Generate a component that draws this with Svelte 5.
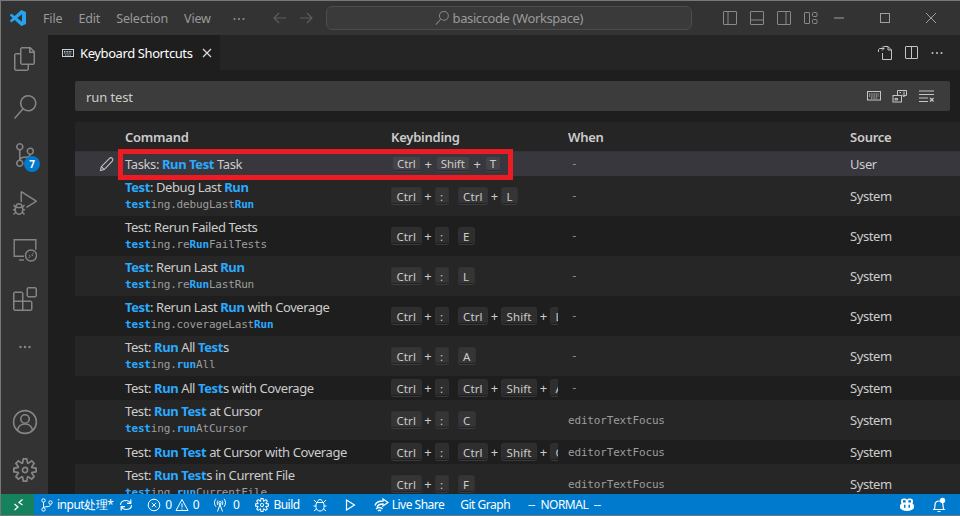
<script>
  const H = (t) => ({ h: t });
  const rows = [
    { sel: true, title: ['Tasks: ', H('Run Test'), ' Task'], keys: [['Ctrl', 'Shift', 'T']], when: '-', src: 'User' },
    { title: [H('Test'), ': Debug Last ', H('Run')], id: [H('test'), 'ing.debugLast', H('Run')], keys: [['Ctrl', ':'], ['Ctrl', 'L']], when: '-', src: 'System' },
    { title: ['Test: Rerun Failed Tests'], id: [H('test'), 'ing.re', H('Run'), 'FailTests'], keys: [['Ctrl', ':'], ['E']], when: '-', src: 'System' },
    { title: [H('Test'), ': Rerun Last ', H('Run')], id: [H('test'), 'ing.re', H('Run'), 'LastRun'], keys: [['Ctrl', ':'], ['L']], when: '-', src: 'System' },
    { title: [H('Test'), ': Rerun Last ', H('Run'), ' with Coverage'], id: [H('test'), 'ing.coverageLast', H('Run')], keys: [['Ctrl', ':'], ['Ctrl', 'Shift', 'L']], when: '-', src: 'System' },
    { title: ['Test: ', H('Run'), ' All ', H('Test'), 's'], id: [H('test'), 'ing.', H('run'), 'All'], keys: [['Ctrl', ':'], ['A']], when: '-', src: 'System' },
    { title: ['Test: ', H('Run'), ' All ', H('Test'), 's with Coverage'], keys: [['Ctrl', ':'], ['Ctrl', 'Shift', 'A']], when: '-', src: 'System' },
    { title: ['Test: ', H('Run Test'), ' at Cursor'], id: [H('test'), 'ing.', H('run'), 'AtCursor'], keys: [['Ctrl', ':'], ['C']], when: 'editorTextFocus', src: 'System' },
    { title: ['Test: ', H('Run Test'), ' at Cursor with Coverage'], keys: [['Ctrl', ':'], ['Ctrl', 'Shift', 'C']], when: 'editorTextFocus', src: 'System' },
    { title: ['Test: ', H('Run Test'), 's in Current File'], id: [H('test'), 'ing.', H('run'), 'CurrentFile'], keys: [['Ctrl', ':'], ['F']], when: 'editorTextFocus', src: 'System' }
  ];
  const menu = ['File', 'Edit', 'Selection', 'View'];
  const act = [
    'M17.5 0h-9L7 1.5V6H2.5L1 7.5v15.07L2.5 24h12.07L16 22.57V18h4.7l1.3-1.43V4.5L17.5 0zm0 2.12l2.38 2.38H17.5V2.12zm-3 20.38h-12v-15H7v9.07L8.5 18h6v4.5zm6-6h-12v-15H16V6h4.5v10.5z',
    'M15.25 0a8.25 8.25 0 0 0-6.18 13.72L1 22.88l1.12 1 8.05-9.12A8.251 8.251 0 1 0 15.25.01V0zm0 15a6.75 6.75 0 1 1 0-13.5 6.75 6.75 0 0 1 0 13.5z',
    'M21.007 8.222A3.738 3.738 0 0 0 15.045 5.2a3.737 3.737 0 0 0 1.156 6.583 2.988 2.988 0 0 1-2.668 1.67h-2.99a4.456 4.456 0 0 0-2.989 1.165V7.4a3.737 3.737 0 1 0-1.494 0v9.117a3.776 3.776 0 1 0 1.816.099 2.99 2.99 0 0 1 2.668-1.667h2.99a4.484 4.484 0 0 0 4.223-3.039 3.736 3.736 0 0 0 3.25-3.687zM4.565 3.738a2.242 2.242 0 1 1 4.484 0 2.242 2.242 0 0 1-4.484 0zm4.484 16.441a2.242 2.242 0 1 1-4.484 0 2.242 2.242 0 0 1 4.484 0zm8.221-9.715a2.242 2.242 0 1 1 0-4.485 2.242 2.242 0 0 1 0 4.485z',
    'M10.94 13.5l-1.32 1.32a3.73 3.73 0 0 0-7.24 0L1.06 13.5 0 14.56l1.72 1.72-.22.22V18H0v1.5h1.5v.08c.077.489.214.966.41 1.42L0 22.94 1.06 24l1.65-1.65A4.308 4.308 0 0 0 6 24a4.31 4.31 0 0 0 3.29-1.65L10.94 24 12 22.94 10.09 21c.198-.464.336-.951.41-1.45v-.1H12V18h-1.5v-1.5l-.22-.22L12 14.56l-1.06-1.06zM6 13.5a2.25 2.25 0 0 1 2.25 2.25h-4.5A2.25 2.25 0 0 1 6 13.5zm3 6a3.33 3.33 0 0 1-3 3 3.33 3.33 0 0 1-3-3v-2.25h6v2.25zm14.76-9.9v1.26L13.5 17.37v-1.77l8.5-5.37L9 2v9.46a5.07 5.07 0 0 0-1.5-.72V.63L8.64 0l15.12 9.6z',
    'M11 17.200H1.200V.8h21.600v10',
    'M13.5 1.5L15 0h7.5L24 1.5V9l-1.5 1.5H15L13.5 9V1.5zm1.5 0V9h7.5V1.5H15zM0 15V6l1.5-1.5H9L10.5 6v7.5H18l1.5 1.5v7.5L18 24H1.5L0 22.5V15zm9-1.5V6H1.5v7.5H9zM9 15H1.5v7.5H9V15zm1.5 7.5H18V15h-7.5v7.5z'
  ];
  const gear = 'M19.85 8.75l4.15.83v4.84l-4.15.83 2.35 3.52-3.43 3.43-3.52-2.35-.83 4.15H9.58l-.83-4.15-3.52 2.35-3.43-3.43 2.35-3.52L0 14.42V9.58l4.15-.83L1.8 5.23 5.23 1.8l3.52 2.35L9.58 0h4.84l.83 4.15 3.52-2.35 3.43 3.43-2.35 3.52zm-1.57 5.07l4-.81v-2l-4-.81-.54-1.3 2.29-3.43-1.43-1.43-3.43 2.29-1.3-.54-.81-4h-2l-.81 4-1.3.54-3.43-2.29-1.43 1.43L6.38 8.9l-.54 1.3-4 .81v2l4 .81.54 1.3-2.29 3.43 1.43 1.43 3.43-2.29 1.3.54.81 4h2l.81-4 1.3-.54 3.43 2.29 1.43-1.43-2.29-3.43.54-1.3zm-8.186-4.672A3.43 3.43 0 0 1 12 8.57 3.44 3.44 0 0 1 15.43 12a3.43 3.43 0 1 1-5.336-2.852zm.956 4.274c.281.188.612.288.95.288A1.7 1.7 0 0 0 13.71 12a1.71 1.71 0 1 0-2.66 1.422z';
</script>

{#snippet dots(w, c, r = 1)}
  <svg width={w} height="4" viewBox="0 0 12 4"><g fill={c}><circle cx="1.5" cy="2" r={r}/><circle cx="6" cy="2" r={r}/><circle cx="10.5" cy="2" r={r}/></g></svg>
{/snippet}

{#snippet rich(parts)}
  {#each parts as p}{#if typeof p === 'string'}{p}{:else}<b>{p.h}</b>{/if}{/each}
{/snippet}

<div class="win">
  <header class="title">
    <svg class="logo" width="16" height="16" viewBox="0 0 24 24"><path fill="#25a3ee" d="M23.15 2.587L18.21.21a1.494 1.494 0 0 0-1.705.29l-9.46 8.63-4.12-3.128a.999.999 0 0 0-1.276.057L.327 7.261A1 1 0 0 0 .326 8.74L3.899 12 .326 15.26a1 1 0 0 0 .001 1.479L1.65 17.94a.999.999 0 0 0 1.276.057l4.12-3.128 9.46 8.63a1.492 1.492 0 0 0 1.704.29l4.942-2.377A1.5 1.5 0 0 0 24 20.06V3.939a1.5 1.5 0 0 0-.85-1.352zm-5.146 14.861L10.826 12l7.178-5.448v10.896z"/></svg>
    <nav class="menu">
      {#each menu as m}<span>{m}</span>{/each}
      <span class="more">{@render dots(14, '#8f8f8f', 1.1)}</span>
    </nav>
    <div class="arrows">
      <svg width="16" height="16" viewBox="0 0 16 16" fill="none" stroke="#5f5f5f" stroke-width="1.1"><path d="M14 8H2.5M7 3L2 8l5 5"/></svg>
      <svg width="16" height="16" viewBox="0 0 16 16" fill="none" stroke="#5f5f5f" stroke-width="1.1"><path d="M2 8h11.5M9 3l5 5-5 5"/></svg>
    </div>
    <div class="cmd">
      <svg width="14" height="14" viewBox="0 0 24 24"><path fill="#8a8a8a" d={act[1]}/></svg>
      <span>basiccode (Workspace)</span>
    </div>
    <div class="layout">
      <svg width="16" height="16" viewBox="0 0 16 16" fill="none" stroke="#8a8a8a"><rect x="1.5" y="1.5" width="13" height="13" rx=".5"/><path d="M6 2v12"/></svg>
      <svg width="16" height="16" viewBox="0 0 16 16" fill="none" stroke="#8a8a8a"><rect x="1.5" y="1.5" width="13" height="13" rx=".5"/><path d="M2 10h12"/></svg>
      <svg width="16" height="16" viewBox="0 0 16 16" fill="none" stroke="#8a8a8a"><rect x="1.5" y="1.5" width="13" height="13" rx=".5"/><path d="M10 2v12"/></svg>
      <svg width="16" height="16" viewBox="0 0 16 16" fill="none" stroke="#8a8a8a"><rect x="1.5" y="2.5" width="5" height="11" rx=".5"/><rect x="9.5" y="2.5" width="4.5" height="4" rx="1"/><rect x="9.5" y="9.5" width="4.5" height="4" rx="1"/></svg>
    </div>
    <div class="wc">
      <svg width="46" height="16" viewBox="0 0 46 16" fill="none" stroke="#a0a0a0"><path d="M18 8h10"/></svg>
      <svg width="46" height="16" viewBox="0 0 46 16" fill="none" stroke="#a0a0a0"><rect x="18.5" y="3.5" width="9" height="9"/></svg>
      <svg width="46" height="16" viewBox="0 0 46 16" fill="none" stroke="#a0a0a0"><path d="M18 3l10 10M28 3L18 13"/></svg>
    </div>
  </header>

  <div class="body">
    <aside class="activity">
      <div class="top">
        {#each act as d, i}
          <div class="ai">
            {#if i === 4}
              <svg width="24" height="24" viewBox="0 0 24 24" fill="none" stroke="#858585" stroke-width="1.4"><path d={d}/><path d="M6 21h5"/><circle cx="18" cy="16.500" r="5.500"/><path d="M15.500 19l1.800-1.800-1.200-1M20.500 14l-1.800 1.800 1.200 1" stroke-width="1"/></svg>
            {:else}
              <svg width="24" height="24" viewBox="0 0 24 24"><path fill="#858585" d={d}/></svg>
            {/if}
            {#if i === 2}<span class="badge">7</span>{/if}
          </div>
        {/each}
        <div class="ai">{@render dots(18, '#858585', 1.25)}</div>
      </div>
      <div class="bottom">
        <div class="ai">
          <svg width="26" height="26" viewBox="0 0 26 26" fill="none" stroke="#858585" stroke-width="1.6"><circle cx="13" cy="13" r="11.400"/><circle cx="13" cy="10" r="4.200"/><path d="M5.500 21c1-4 4-6 7.500-6s6.500 2 7.500 6"/></svg>
        </div>
        <div class="ai"><svg width="24" height="24" viewBox="0 0 24 24"><path fill="#858585" d={gear}/></svg></div>
      </div>
    </aside>

    <main class="editor">
      <div class="tabs">
        <div class="tab">
          <svg width="12" height="12" viewBox="0 0 12 12" fill="none" stroke="#c5d3de"><rect x=".5" y="2.500" width="11" height="7"/><path d="M2 4.500h8M2 6h8M3 8h6" stroke-dasharray="1 .6"/></svg>
          <span>Keyboard Shortcuts</span>
          <svg class="x" width="10" height="10" viewBox="0 0 10 10" fill="none" stroke="#ddd" stroke-width="1.200"><path d="M1 1l8 8M9 1L1 9"/></svg>
        </div>
        <div class="tabacts">
          <svg width="16" height="16" viewBox="0 0 16 16" fill="none" stroke="#c5c5c5"><path d="M6.500 1.500h4.500l3.500 3.500v9.500h-9V8M11 1.500v3.500h3.500M1.500 7V5c0-1 .7-1.500 1.500-1.500h4M5 1.500l2 2-2 2"/></svg>
          <svg width="15" height="15" viewBox="0 0 15 15" fill="none" stroke="#c5c5c5"><rect x="1.500" y="1.500" width="12" height="12" rx=".5"/><path d="M7.500 2v11"/></svg>
          {@render dots(14, '#c5c5c5', 1)}
        </div>
      </div>

      <div class="search">
        <span class="q">run test</span>
        <div class="sicons">
          <svg width="15" height="14" viewBox="0 0 15 14" fill="none" stroke="#c5c5c5"><rect x=".5" y="2.500" width="13" height="8.500"/><path d="M2 5h10M2 7h10M4 9h6" stroke-dasharray="1 .7"/></svg>
          <svg width="16" height="16" viewBox="0 0 16 16" fill="none" stroke="#c5c5c5"><rect x="1" y="7.500" width="8.500" height="6.500"/><path d="M5.500 7.500v-5h9v5h-3"/><path d="M3 10.500h2.500v1.500H3zM7.500 4.500h1.500M12 3.500v5M10.300 7L12 8.700 13.700 7"/></svg>
          <svg width="16" height="16" viewBox="0 0 16 16" fill="none" stroke="#c5c5c5"><path d="M1 3h15M1 6.500h15M1 10h9M1 13.500h9"/><path d="M12 10l3.500 3.500M15.500 10L12 13.500" stroke-width="1.400"/></svg>
        </div>
      </div>

      <div class="table">
        <div class="row head">
          <span></span><span>Command</span><span>Keybinding</span><span>When</span><span>Source</span>
        </div>
        <div class="list">
          {#each rows as r, i}
            <div class="row" class:sel={r.sel} class:alt={i % 2 === 1} class:tall={r.id}>
              <span class="act">
                {#if r.sel}
                  <svg width="16" height="16" viewBox="0 0 16 16" fill="none" stroke="#c5c5c5" stroke-width="1.100"><path d="M1.500 14.500l.8-3.800L10.500 2.300c.8-.8 2-.8 2.800 0s.7 2 0 2.800L5.200 13.600z"/><path d="M2.300 10.700l2.900 2.900"/></svg>
                {/if}
              </span>
              <div class="cmdcell">
                <div>{@render rich(r.title)}</div>
                {#if r.id}<div class="id">{@render rich(r.id)}</div>{/if}
              </div>
              <div class="keys">
                {#each r.keys as chord}
                  <span class="chord">
                    {#each chord as k, j}
                      {#if j > 0}<i>+</i>{/if}<kbd class:colon={k === ':'}>{k}</kbd>
                    {/each}
                  </span>
                {/each}
              </div>
              <span class="when" class:dash={r.when === '-'}>{r.when}</span>
              <span>{r.src}</span>
            </div>
          {/each}
        </div>
      </div>
      <div class="mark"></div>
    </main>
  </div>

  <footer class="status">
    <span class="remote"><svg width="16" height="16" viewBox="0 0 16 16" fill="none" stroke="#fff" stroke-width="1.200"><path d="M4.500 7l3.500 3-3.500 3M12.500 2.500L9 5.500l3.500 2.500"/></svg></span>
    <span class="si branch"><svg width="14" height="14" viewBox="0 0 14 14" fill="none" stroke="#fff"><circle cx="3.500" cy="2.500" r="1.700"/><circle cx="3.500" cy="11.500" r="1.700"/><circle cx="10.500" cy="4.500" r="1.700"/><path d="M3.500 4.200v5.600M10.500 6.200c0 2-2 2.500-3.500 2.500S3.500 9 3.500 10"/></svg>input处理*</span>
    <span class="si sync"><svg width="14" height="14" viewBox="0 0 14 14" fill="none" stroke="#fff" stroke-width="1.200"><path d="M1.500 7c0-3 2.500-4.500 5.500-4.500 2 0 3.500 1 4.500 2.500M12.500 7c0 3-2.500 4.500-5.500 4.500-2 0-3.500-1-4.500-2.500"/><path d="M11.800 1.500V5.300H8M2.200 12.500V8.700H6"/></svg></span>
    <span class="si err"><svg width="14" height="14" viewBox="0 0 14 14" fill="none" stroke="#fff"><circle cx="7" cy="7" r="5.800"/><path d="M4.800 4.800l4.400 4.400M9.200 4.800l-4.400 4.400"/></svg>0<svg class="warn" width="14" height="14" viewBox="0 0 14 14" fill="none" stroke="#fff"><path d="M7 1.500l6 11H1z"/><path d="M7 5.500v4M7 10.500v1"/></svg>0</span>
    <span class="si ports"><svg width="14" height="14" viewBox="0 0 14 14" fill="none" stroke="#fff"><circle cx="7" cy="4.700" r="1.200"/><path d="M7 6v1M4.500 13.500L7 6.500l2.500 7M3 .8C1 3 1 6.500 3 8.700M11 .8c2 2.200 2 5.700 0 7.900M5 2.500c-1 1.300-1 3.200 0 4.500M9 2.500c1 1.300 1 3.200 0 4.500"/></svg>0</span>
    <span class="si build"><svg width="14" height="14" viewBox="0 0 24 24"><path fill="#fff" d={gear}/></svg>Build</span>
    <span class="si bug"><svg width="14" height="14" viewBox="0 0 14 14" fill="none" stroke="#fff"><path d="M4 4.500h6l1 1.500v3.500c0 2-2 3.500-4 3.500S3 11.500 3 9.500V6zM4.500 4.500c0-1.500 1-3 2.500-3s2.500 1.500 2.500 3M1 2l3 3M13 2l-3 3M.5 8H3M11 8h2.500M1 13l2.500-2M13 13l-2.500-2"/></svg></span>
    <span class="si"><svg width="14" height="14" viewBox="0 0 14 14" fill="none" stroke="#fff" stroke-width="1.200"><path d="M3.500 2v10l8-5z"/></svg></span>
    <span class="si ls"><svg width="15" height="14" viewBox="0 0 15 14" fill="none" stroke="#fff" stroke-width="1.300"><path d="M1 7.500C2 4 5 3 9 3V1l5 3.500L9 8V6C6 6 4 6.500 3 9M2 11c1.500-2 5-2 6.500 0M4 13c.8-1 2.200-1 3 0"/></svg>Live Share</span>
    <span class="si">Git Graph</span>
    <span class="si normal">-- NORMAL --</span>
    <span class="spacer"></span>
    <span class="si"><svg width="16" height="16" viewBox="0 0 16 16"><path fill="#fff" d="M5 1.500c1.500 0 2.500.5 3 1.300.5-.8 1.500-1.300 3-1.300 2 0 3 1 3 2.700 0 1-.2 1.800-.5 2.300.9.600 1.500 1.500 1.500 2.500v1.500c0 1.500-3 3.500-7 3.500S1 12 1 10.500V9c0-1 .6-1.900 1.500-2.500C2.200 6 2 5.200 2 4.200 2 2.500 3 1.500 5 1.500z"/><path fill="#007acc" d="M5 7.800h1.500v3H5zM9.500 7.800H11v3H9.500zM4 3.200h2.700v2.300H4zM9.300 3.200H12v2.300H9.300z"/></svg></span>
    <span class="si bell"><svg width="16" height="16" viewBox="0 0 16 16" fill="none" stroke="#fff" stroke-width="1.200"><path d="M3 12.500h10c-1-1-1-2-1-4.500 0-2.500-1.500-4-4-4S4 5.500 4 8c0 2.500 0 3.500-1 4.500zM6.500 14.500h3"/><circle cx="11.500" cy="3.500" r="2.700" fill="#fff" stroke="none"/></svg></span>
  </footer>
</div>

<style>
  :global(body) { margin: 0; background: #1e1e1e; }
  .win {
    width: 960px; height: 516px; box-sizing: border-box; overflow: hidden;
    border: 1px solid #777; border-right: 0;
    display: flex; flex-direction: column;
    font: 13px/18px "Noto Sans", sans-serif; letter-spacing: -0.4px; color: #ccc; background: #1e1e1e;
  }
  svg { display: block; flex: none; }

  .title { height: 34px; flex: none; background: #333334; display: flex; align-items: center; color: #9a9a9a; }
  .logo { margin-left: 9px; }
  .menu { display: flex; align-items: center; margin-left: 17px; gap: 16px; letter-spacing: -0.15px; font-size: 12.5px; padding-top: 1px; }
  .more { margin-left: 5px; }
  .arrows { display: flex; gap: 10px; margin-left: 26px; }
  .cmd {
    flex: none; margin-left: 12px; width: 366px; height: 24px; box-sizing: border-box; border: 1px solid #4c4c4c; border-radius: 6px;
    background: #3a3a3b; display: flex; justify-content: center; align-items: center; gap: 4px;
  }
  .layout { display: flex; gap: 11px; margin-left: 30px; flex: none; }
  .wc { display: flex; margin-left: -3px; flex: none; }

  .body { flex: 1; min-height: 0; display: flex; }
  .activity { width: 47px; flex: none; background: #333; display: flex; flex-direction: column; justify-content: space-between; }
  .ai { height: 48px; display: flex; align-items: center; justify-content: center; position: relative; }
  .badge {
    position: absolute; left: 23px; top: 25px; width: 16px; height: 16px; border-radius: 50%; background: #007acc; color: #fff;
    font-size: 10px; line-height: 16px; text-align: center; font-weight: 700; letter-spacing: 0;
  }

  .editor { flex: 1; min-width: 0; display: flex; flex-direction: column; position: relative; overflow: hidden; background: #1e1e1e; }
  .tabs { height: 35px; flex: none; background: #252526; display: flex; align-items: center; justify-content: space-between; }
  .tab { width: 172px; height: 35px; box-sizing: border-box; background: #1e1e1e; display: flex; align-items: center; padding-left: 14px; color: #fff; }
  .tab span { margin-left: 6px; }
  .x { margin-left: 10px; }
  .tabacts { display: flex; align-items: center; gap: 11px; padding-right: 16px; }

  .search {
    margin: 11px 10px 11px 27px; height: 30px; flex: none; background: #3c3c3c; border-radius: 2px;
    display: flex; align-items: center; justify-content: space-between; padding: 0 16px 0 11px;
  }
  .q { letter-spacing: -0.1px; padding-top: 1px; }
  .sicons { display: flex; align-items: center; gap: 10px; }

  .table { margin-left: 27px; flex: 1; min-height: 0; overflow: hidden; }
  .row { display: grid; grid-template-columns: 50px 266px 177px 282px 1fr; align-items: center; height: 24px; background: #1e1e1e; }
  .row.tall { height: 40px; }
  .row.alt { background: #262626; }
  .head { height: 30px; background: #252526; font-weight: 600; box-shadow: inset 0 -1px 0 #333; letter-spacing: -0.25px; }
  .row.sel { background: #37373d; }
  .list { display: flex; flex-direction: column; }
  .act { display: flex; justify-content: flex-end; padding-right: 10px; }
  .cmdcell { line-height: 18px; }
  .row.tall .cmdcell { padding-bottom: 2px; }
  b { color: #2aaaff; font-weight: 700; }
  .id { font: 11px/16px "DejaVu Sans Mono", monospace; letter-spacing: -0.17px; color: #9d9d9d; margin-top: 1px; }
  .keys { display: flex; gap: 9px; overflow: hidden; width: 167px; font-size: 11.5px; align-items: center; letter-spacing: 0.1px; }
  .chord { display: flex; align-items: center; flex: none; }
  .chord i { font-style: normal; width: 13px; text-align: center; font-size: 13px; }
  kbd {
    font: inherit; height: 18px; line-height: 17px; box-sizing: border-box; padding: 0 4.5px; border-radius: 3px;
    background: rgba(128, 128, 128, 0.17); border: 1px solid rgba(51, 51, 51, 0.6); border-bottom-color: rgba(68, 68, 68, 0.6);
    box-shadow: inset 0 -1px 0 rgba(0, 0, 0, 0.36); color: #ccc;
  }
  kbd.colon { width: 14px; padding: 0; text-align: center; }
  .sel .keys { padding-left: 1px; letter-spacing: -0.1px; }
  .sel kbd { height: 16px; line-height: 14px; padding: 0 4px; }
  .sel .chord i { width: 15px; }
  .when { font: 11px/16px "DejaVu Sans Mono", monospace; letter-spacing: -0.17px; color: #9d9d9d; padding-top: 2px; }
  .when.dash { padding: 0 0 0 3px; }
  .mark {
    position: absolute; left: 70px; top: 114px; width: 395px; height: 31px; box-sizing: border-box;
    border: 5px solid #ed1c24; pointer-events: none;
  }

  .status { height: 21px; flex: none; background: #007acc; display: flex; align-items: center; color: #fff; font-size: 12px; letter-spacing: -0.5px; }
  .remote { width: 33px; height: 21px; background: #16825d; display: flex; align-items: center; justify-content: center; }
  .si { display: flex; align-items: center; gap: 4px; padding: 0 8px; flex: none; }
  .si.branch { padding: 0 3px 0 6px; gap: 3px; }
  .si.sync { padding: 0 3px; }
  .si.err { padding-left: 11px; }
  .si.ports { margin-left: -2px; gap: 6px; }
  .si.build { margin-left: 0; }
  .si.bug { margin-left: -3px; }
  .si.ls { gap: 3px; margin-left: 1px; }
  .warn { margin-left: -1px; }
  .normal { word-spacing: 3px; margin-left: 2px; }
  .spacer { flex: 1; }
  .bell { padding-right: 13px; }
</style>
